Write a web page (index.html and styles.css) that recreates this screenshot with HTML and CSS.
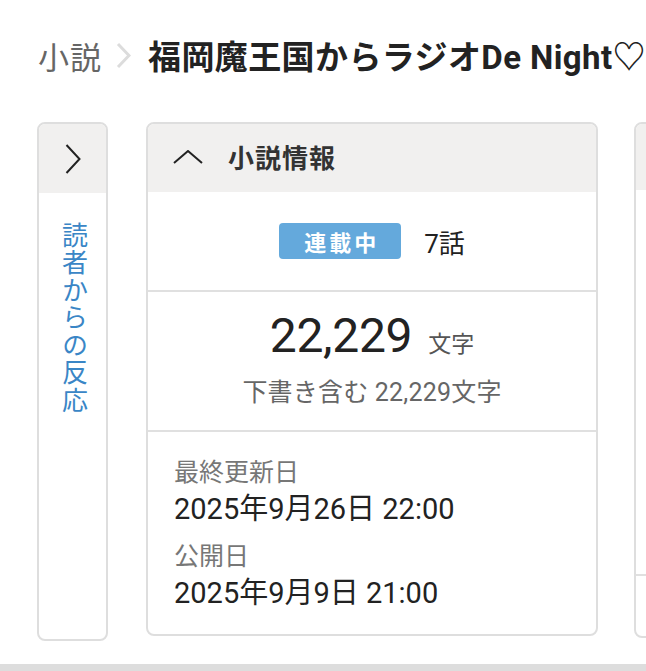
FILE: index.html
```html
<!DOCTYPE html>
<html lang="ja">
<head>
<meta charset="utf-8">
<title>小説情報</title>
<link rel="stylesheet" href="styles.css">
</head>
<body>
<div class="page">
  <nav class="crumbs">
    <span class="crumb-parent">小説</span>
    <svg class="crumb-sep" width="15" height="27" viewBox="0 0 15 27"><polyline points="2,2 13,13.5 2,25" fill="none" stroke="#dcdcdc" stroke-width="3"/></svg>
    <span class="crumb-title">福岡魔王国からラジオDe Night♡</span>
  </nav>

  <div class="cards">
    <section class="card side">
      <div class="card-head side-head">
        <svg width="16" height="30" viewBox="0 0 16 30"><polyline points="1.5,1 14.5,15 1.5,29" fill="none" stroke="#222" stroke-width="2"/></svg>
      </div>
      <div class="side-body">
        <span class="vtext">読者からの反応</span>
      </div>
    </section>

    <section class="card main">
      <div class="card-head main-head">
        <svg class="up" width="30" height="14" viewBox="0 0 30 14"><polyline points="1,13 15,1 29,13" fill="none" stroke="#222" stroke-width="2"/></svg>
        <h2 class="head-title">小説情報</h2>
      </div>
      <div class="sec sec-status">
        <span class="badge">連載中</span>
        <span class="eps">7話</span>
      </div>
      <div class="sec sec-count">
        <div class="count"><span class="count-num">22,229</span><span class="count-unit">文字</span></div>
        <div class="count-sub">下書き含む 22,229文字</div>
      </div>
      <div class="sec sec-dates">
        <div class="date-block">
          <div class="date-label">最終更新日</div>
          <div class="date-value">2025年9月26日 22:00</div>
        </div>
        <div class="date-block">
          <div class="date-label">公開日</div>
          <div class="date-value">2025年9月9日 21:00</div>
        </div>
      </div>
    </section>

    <section class="card next">
      <div class="card-head next-head"></div>
      <div class="next-body"></div>
      <div class="next-foot"></div>
    </section>
  </div>

  <div class="bottom-bar"></div>
</div>
</body>
</html>
```

FILE: styles.css
```css
* { box-sizing: border-box; margin: 0; padding: 0; }

html, body {
  background: #fff;
}

body {
  width: 646px;
  height: 671px;
  overflow: hidden;
  font-family: Roboto, "Noto Sans CJK JP", sans-serif;
  color: #222;
}

.page {
  display: flex;
  flex-direction: column;
  height: 671px;
}

.crumbs {
  height: 110px;
  display: flex;
  align-items: center;
  padding-left: 38px;
  white-space: nowrap;
  overflow: hidden;
}

.crumb-parent {
  font-size: 31px;
  color: #666;
  letter-spacing: 1px;
}

.crumb-sep {
  margin: 0 17px 0 14px;
  flex: none;
}

.crumb-title {
  font-size: 33px;
  font-weight: 700;
  color: #222;
  letter-spacing: 0.4px;
}

.cards {
  margin-top: 12px;
  display: flex;
  align-items: flex-start;
  padding-left: 37px;
  overflow: hidden;
}

.card {
  flex: none;
  border: 2px solid #dedede;
  border-radius: 8px;
  overflow: hidden;
  background: #fff;
}

.card-head {
  background: #f1f0ef;
  height: 69px;
  display: flex;
  align-items: center;
}

/* left collapsed card */
.side {
  width: 71px;
  height: 519px;
  margin-right: 38px;
}

.side-head {
  justify-content: center;
}

.side-body {
  display: flex;
  justify-content: center;
  padding-top: 29px;
}

.vtext {
  writing-mode: vertical-rl;
  font-size: 26px;
  letter-spacing: 1.5px;
  color: #3a86c6;
  line-height: 1;
}

/* main card */
.main {
  width: 452px;
  margin-right: 36px;
}

.main-head {
  height: 68px;
  padding-left: 25px;
  gap: 25px;
}

.head-title {
  font-size: 26px;
  font-weight: 700;
  color: #333;
  letter-spacing: 1px;
  margin-top: -3px;
}

.up {
  margin-top: -3px;
}

.sec + .sec {
  border-top: 2px solid #e0e0e0;
}

.sec-status {
  height: 98px;
  display: flex;
  justify-content: center;
  align-items: center;
  gap: 23px;
}

.badge {
  display: inline-flex;
  align-items: center;
  justify-content: center;
  width: 122px;
  height: 36px;
  border-radius: 4px;
  background: #64a9dc;
  color: #fff;
  font-size: 22px;
  font-weight: 700;
  letter-spacing: 3px;
  padding-left: 3px;
}

.eps {
  font-size: 26px;
  color: #222;
}

.sec-count {
  height: 140px;
  padding-top: 16px;
  text-align: center;
}

.count {
  line-height: 56px;
  white-space: nowrap;
}

.count-num {
  font-size: 48px;
  color: #222;
  letter-spacing: -0.3px;
}

.count-unit {
  font-size: 23px;
  color: #555;
  margin-left: 16px;
}

.count-sub {
  margin-top: 2px;
  line-height: 32px;
  font-size: 25px;
  color: #666;
  letter-spacing: 0.2px;
}

.sec-dates {
  padding: 23px 26px 22px;
  display: flex;
  flex-direction: column;
  gap: 11px;
}

.date-label {
  font-size: 25px;
  line-height: 36px;
  color: #777;
}

.date-value {
  font-size: 29px;
  line-height: 37px;
  color: #222;
  white-space: nowrap;
}

/* partially visible card on the right */
.next {
  width: 300px;
  height: 516px;
  display: flex;
  flex-direction: column;
}

.next-head {
  height: 66px;
  flex: none;
}

.next-body {
  flex: 1;
}

.next-foot {
  height: 62px;
  border-top: 2px solid #e0e0e0;
}

.bottom-bar {
  margin-top: auto;
  height: 7px;
  background: #dddddd;
}
```
